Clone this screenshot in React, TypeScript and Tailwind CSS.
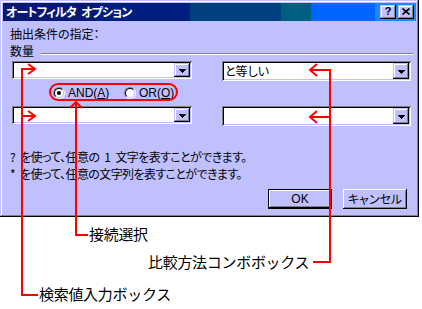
import React from "react";

const bevel =
  "shadow-[inset_-1px_-1px_0_#000,inset_1px_1px_0_#c0c0ff,inset_-2px_-2px_0_#808080,inset_2px_2px_0_#fff]";
const sunken =
  "shadow-[inset_1px_1px_0_#808080,inset_-1px_-1px_0_#fff,inset_2px_2px_0_#000,inset_-2px_-2px_0_#c0c0ff]";

function Arrow() {
  return (
    <svg width="7" height="4" viewBox="0 0 7 4" shapeRendering="crispEdges">
      <polygon points="0,0 7,0 3.5,4" fill="#000" />
    </svg>
  );
}

function Combo({ w, h, text }: { w: string; h: string; text?: string }) {
  return (
    <div className={`${w} ${h} bg-white ${sunken} p-[2px] flex`}>
      <div className="flex-1 pl-[1px] text-[12px] leading-none flex items-center [font-feature-settings:'palt']">
        {text}
      </div>
      <div className={`w-[16px] h-full bg-[#c0c0ff] ${bevel} flex items-center justify-center pt-[1px]`}>
        <Arrow />
      </div>
    </div>
  );
}

function Radio({ checked }: { checked?: boolean }) {
  return (
    <div className="w-[12px] h-[12px] rounded-full border border-t-[#808080] border-l-[#808080] border-r-white border-b-white">
      <div className="w-full h-full rounded-full bg-white border border-t-black border-l-black border-r-[#c0c0ff] border-b-[#c0c0ff] flex items-center justify-center">
        {checked && <div className="w-[4px] h-[4px] rounded-full bg-black" />}
      </div>
    </div>
  );
}

export default function App() {
  return (
    <div className="relative w-[422px] h-[309px] bg-white overflow-hidden font-['Noto_Sans_CJK_JP',sans-serif] text-black">
      <div className="w-[419px] h-[217px] bg-[#c0c0ff] p-[2px] shadow-[inset_-1px_-1px_0_#000,inset_1px_1px_0_#c0c0ff,inset_-2px_-2px_0_#808080,inset_2px_2px_0_#fff] flex flex-col">
        {/* title bar */}
        <div className="mx-[1px] mt-[1px] h-[18px] flex items-center justify-between pl-[3px] pr-[2px] bg-[linear-gradient(to_right,#0a1872_0px,#0a1872_92px,#001d80_92px,#001d80_187px,#003f80_187px,#003f80_278px,#005f80_278px,#005f80_308px,#0066ff_308px,#0066ff_372px,#1a88ff_372px)]">
          <span className="text-white font-bold text-[12px] leading-none tracking-[-0.8px] [font-feature-settings:'palt']">
            オートフィルタ<span className="ml-[5px]">オプション</span>
          </span>
          <div className="flex gap-[2px]">
            <div className={`w-[16px] h-[14px] bg-[#c0c0ff] ${bevel} flex items-center justify-center font-['Liberation_Sans',sans-serif] font-bold text-[11px] leading-none pb-[1px]`}>
              ?
            </div>
            <div className={`w-[16px] h-[14px] bg-[#c0c0ff] ${bevel} flex items-center justify-center pb-[1px]`}>
              <svg width="8" height="7" viewBox="0 0 8 7">
                <path d="M0.5,0.5 L7.5,6.5 M7.5,0.5 L0.5,6.5" stroke="#000" strokeWidth="1.6" />
              </svg>
            </div>
          </div>
        </div>

        {/* content */}
        <div className="flex flex-col pl-[8px] pr-[4px] text-[12px] [font-feature-settings:'palt']">
          <div className="mt-[6px] h-[14px] leading-[14px]">抽出条件の指定：</div>
          <div className="mt-[3px] h-[14px] leading-[14px] flex items-start">
            <span>数量</span>
            <div className="flex-1 ml-[7px] mt-[9px] h-[2px] border-t border-t-[#808080] border-b border-b-white" />
          </div>

          <div className="mt-[3px] flex items-start">
            <div className="ml-[2px]">
              <Combo w="w-[180px]" h="h-[18px]" />
            </div>
            <div className="ml-[30px]">
              <Combo w="w-[189px]" h="h-[20px]" text="と等しい" />
            </div>
          </div>

          <div className="h-[25px] flex items-center pb-[2px]">
            <div className="ml-[43px] w-[71px] flex items-center">
              <Radio checked />
              <span className="ml-[3px] leading-none font-['Liberation_Sans',sans-serif]">
                AND(<span className="underline">A</span>)
              </span>
            </div>
            <div className="flex items-center">
              <Radio />
              <span className="ml-[3px] leading-none font-['Liberation_Sans',sans-serif]">
                OR(<span className="underline">O</span>)
              </span>
            </div>
          </div>

          <div className="flex items-start">
            <div className="ml-[2px]">
              <Combo w="w-[180px]" h="h-[18px]" />
            </div>
            <div className="ml-[30px]">
              <Combo w="w-[189px]" h="h-[20px]" />
            </div>
          </div>

          <div className="mt-[22px] leading-[17px] tracking-[-0.6px]">
            <div>
              ?<span className="ml-[5px]">を使って、任意の</span>
              <span className="ml-[5px]">1</span>
              <span className="ml-[5px]">文字を表すことができます。</span>
            </div>
            <div>
              *<span className="ml-[5px]">を使って、任意の文字列を表すことができます。</span>
            </div>
          </div>

          <div className="mt-[7px] flex justify-end gap-[11px] pr-[6px]">
            <div className="w-[64px] h-[20px] border border-black shadow-[inset_-1px_-1px_0_#000,inset_1px_1px_0_#fff,inset_-2px_-2px_0_#808080] flex items-center justify-center leading-none font-['Liberation_Sans',sans-serif]">
              OK
            </div>
            <div className="w-[64px] h-[20px] shadow-[inset_-1px_-1px_0_#000,inset_1px_1px_0_#fff,inset_-2px_-2px_0_#808080] flex items-center justify-center leading-none">
              キャンセル
            </div>
          </div>
        </div>
      </div>

      {/* annotation overlay */}
      <svg
        className="absolute left-0 top-0 pointer-events-none"
        width="422"
        height="309"
        viewBox="0 0 422 309"
      >
        <g stroke="#ff0000" strokeWidth="2" fill="none" strokeLinejoin="miter" strokeLinecap="butt">
          {/* search value boxes */}
          <path d="M35,69 H22 V295 H38" />
          <path d="M28,64 L35,69 L28,74" />
          <path d="M22,116 H35" />
          <path d="M28,111 L35,116 L28,121" />
          {/* connection select */}
          <rect x="50" y="84" width="127" height="16" rx="8" ry="8" />
          <path d="M76,103 V235 H88" />
          <path d="M70,108 L76,102 L82,108" />
          {/* comparison combo */}
          <path d="M310,70 H330 V262 H313" />
          <path d="M317,64 L310,70 L317,76" />
          <path d="M310,117 H330" />
          <path d="M317,111 L310,117 L317,123" />
        </g>
      </svg>

      <div className="absolute left-[89px] top-[226px] text-[15px] leading-[15px] tracking-[-0.3px] whitespace-nowrap">
        接続選択
      </div>
      <div className="absolute left-[148px] top-[254px] text-[15px] leading-[15px] tracking-[-0.3px] whitespace-nowrap">
        比較方法コンボボックス
      </div>
      <div className="absolute left-[39px] top-[286px] text-[15px] leading-[15px] tracking-[-0.3px] whitespace-nowrap">
        検索値入力ボックス
      </div>
    </div>
  );
}
